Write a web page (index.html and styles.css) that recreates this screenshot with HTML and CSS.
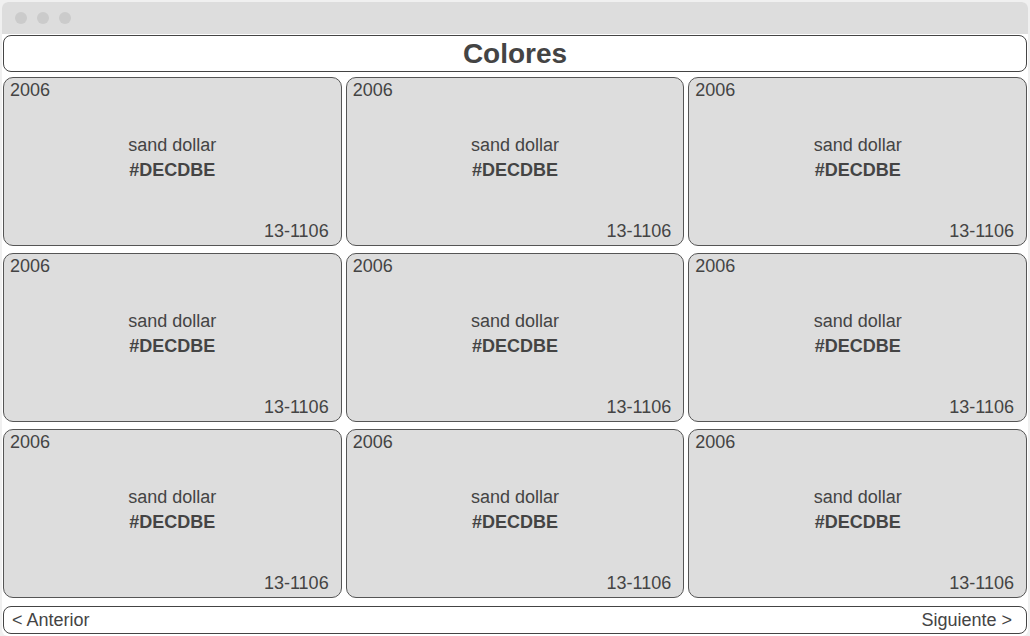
FILE: index.html
```html
<!DOCTYPE html>
<html lang="es">
<head>
  <meta charset="UTF-8">
  <meta name="viewport" content="width=device-width, initial-scale=1.0">
  <title>Colores</title>
  <link rel="stylesheet" href="styles.css">
</head>
<body>
  <div class="window">
    <div class="window-bar">
      <span class="dot"></span>
      <span class="dot"></span>
      <span class="dot"></span>
    </div>
    <div class="window-body">
      <h1 class="title">Colores</h1>
      <div class="color-grid">
        <div class="color-card">
          <div class="year">2006</div>
          <div class="middle"><div class="name">sand dollar</div><div class="hex">#DECDBE</div></div>
          <div class="code">13-1106</div>
        </div>
        <div class="color-card">
          <div class="year">2006</div>
          <div class="middle"><div class="name">sand dollar</div><div class="hex">#DECDBE</div></div>
          <div class="code">13-1106</div>
        </div>
        <div class="color-card">
          <div class="year">2006</div>
          <div class="middle"><div class="name">sand dollar</div><div class="hex">#DECDBE</div></div>
          <div class="code">13-1106</div>
        </div>
        <div class="color-card">
          <div class="year">2006</div>
          <div class="middle"><div class="name">sand dollar</div><div class="hex">#DECDBE</div></div>
          <div class="code">13-1106</div>
        </div>
        <div class="color-card">
          <div class="year">2006</div>
          <div class="middle"><div class="name">sand dollar</div><div class="hex">#DECDBE</div></div>
          <div class="code">13-1106</div>
        </div>
        <div class="color-card">
          <div class="year">2006</div>
          <div class="middle"><div class="name">sand dollar</div><div class="hex">#DECDBE</div></div>
          <div class="code">13-1106</div>
        </div>
        <div class="color-card">
          <div class="year">2006</div>
          <div class="middle"><div class="name">sand dollar</div><div class="hex">#DECDBE</div></div>
          <div class="code">13-1106</div>
        </div>
        <div class="color-card">
          <div class="year">2006</div>
          <div class="middle"><div class="name">sand dollar</div><div class="hex">#DECDBE</div></div>
          <div class="code">13-1106</div>
        </div>
        <div class="color-card">
          <div class="year">2006</div>
          <div class="middle"><div class="name">sand dollar</div><div class="hex">#DECDBE</div></div>
          <div class="code">13-1106</div>
        </div>
      </div>
      <div class="pager">
        <span>&lt; Anterior</span>
        <span>Siguiente &gt;</span>
      </div>
    </div>
  </div>
</body>
</html>
```

FILE: styles.css
```css
body {
  background-color: #f0f0f0;
  font-family: "Liberation Sans", Arial, sans-serif;
  color: #444;
  margin: 0;
  padding: 2px 2px 0 2px;
}
.window {
  background-color: white;
  border-radius: 6px;
  overflow: hidden;
  height: 634px;
  display: flex;
  flex-direction: column;
}
.window-bar {
  background-color: #dddddd;
  height: 32px;
  display: flex;
  align-items: center;
  gap: 10px;
  padding-left: 13px;
  flex-shrink: 0;
}
.dot {
  width: 12px;
  height: 12px;
  border-radius: 50%;
  background-color: #cbcbcb;
}
.window-body {
  padding: 1px 1px 0 1px;
  display: flex;
  flex-direction: column;
}
.title {
  margin: 0;
  height: 35px;
  line-height: 35px;
  border: 1px solid #444;
  border-radius: 8px;
  text-align: center;
  font-size: 28px;
  font-weight: bold;
  color: #444;
}
.color-grid {
  margin-top: 5px;
  display: grid;
  grid-template-columns: repeat(3, 1fr);
  grid-template-rows: repeat(3, 169px);
  column-gap: 4px;
  row-gap: 7px;
}
.color-card {
  background-color: #dddddd;
  border: 1px solid #555;
  border-radius: 10px;
  padding: 2px 12px 3px 6px;
  display: flex;
  flex-direction: column;
  font-size: 18px;
  line-height: 21px;
}
.middle {
  flex: 1;
  display: flex;
  flex-direction: column;
  justify-content: center;
  align-items: center;
  padding-bottom: 6px;
  margin-right: -6px;
  line-height: 25px;
}
.hex {
  font-weight: bold;
}
.code {
  text-align: right;
}
.pager {
  margin-top: 8px;
  height: 26px;
  border: 1px solid #444;
  border-radius: 8px;
  display: flex;
  justify-content: space-between;
  align-items: center;
  padding: 0 14px 0 8px;
  font-size: 18px;
}
```
